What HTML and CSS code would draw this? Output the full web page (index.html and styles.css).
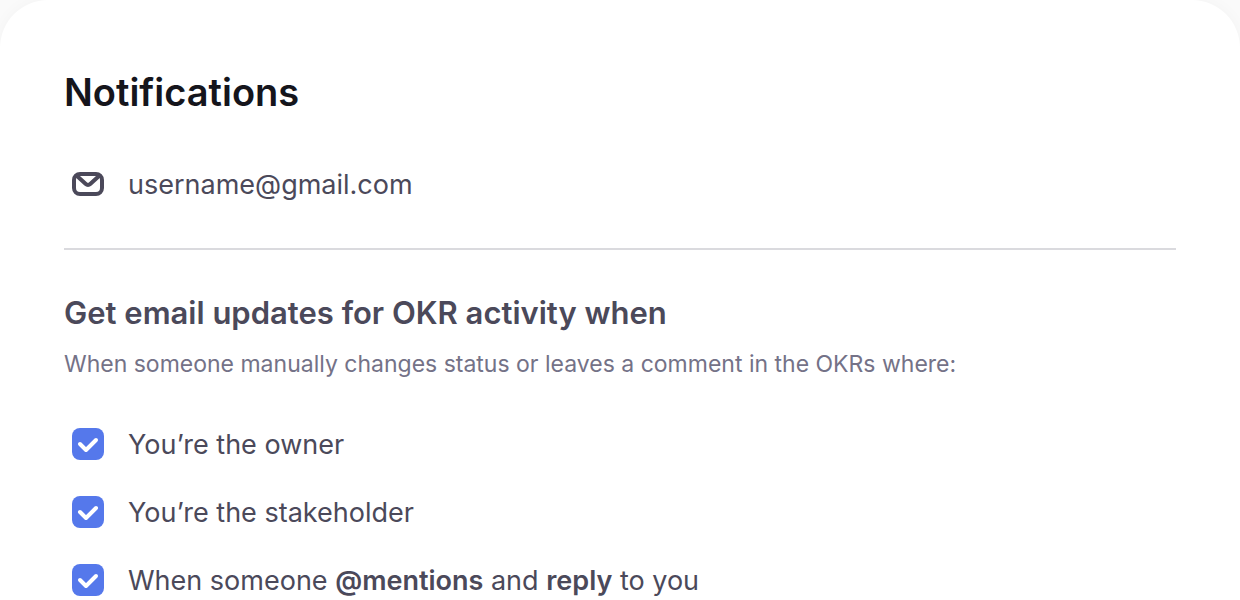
FILE: index.html
```html
<!DOCTYPE html>
<html lang="en">
<head>
    <meta charset="UTF-8">
    <title>Notifications</title>
    <link rel="stylesheet" href="styles.css">
</head>
<body>
    <main class="card">
        <h1 class="title">Notifications</h1>
        <div class="row account">
            <svg class="mail" viewBox="0 0 32 32" aria-hidden="true">
                <rect x="2" y="6" width="28" height="20" rx="6"/>
                <path d="M5 8l8.800 8a3.200 3.200 0 0 0 4.400 0L27 8"/>
            </svg>
            <span class="text">username@gmail.com</span>
        </div>
        <section class="updates">
            <h2 class="subtitle">Get email updates for OKR activity when</h2>
            <p class="hint">When someone manually changes status or leaves a comment in the OKRs where:</p>
            <div class="options">
                <label class="row"><input class="check" type="checkbox" checked><span class="text">You’re the owner</span></label>
                <label class="row"><input class="check" type="checkbox" checked><span class="text">You’re the stakeholder</span></label>
                <label class="row"><input class="check" type="checkbox" checked><span class="text">When someone <b>@mentions</b> and <b>reply</b> to you</span></label>
            </div>
        </section>
    </main>
</body>
</html>
```
FILE: styles.css
```css
* {
    box-sizing: border-box;
    margin: 0;
    padding: 0;
}

html {
    overflow: hidden;
}

body {
    min-height: 100vh;
    background: #fafafa;
    color: #4b495a;
    font-family: Gilroy, Inter, "Liberation Sans", sans-serif;
}

.card {
    min-height: 100vh;
    padding: 68px 64px 0;
    border-radius: 48px 48px 0 0;
    background: #fff;
    box-shadow: 0 0 16px rgba(0, 0, 0, 0.03);
}

.title {
    color: #15151c;
    font-size: 38px;
    font-weight: 600;
    line-height: 48px;
}

.row {
    display: flex;
    align-items: center;
    gap: 24px;
    padding-left: 8px;
    font-size: 27px;
}

.text {
    padding-top: 2px;
    line-height: 34px;
}

.text b {
    font-weight: 600;
}

.account {
    padding-top: 50px;
    padding-bottom: 46px;
    border-bottom: 2px solid #dadade;
}

.mail {
    width: 32px;
    height: 32px;
    fill: none;
    stroke: #4b495a;
    stroke-width: 4;
    stroke-linecap: round;
    stroke-linejoin: round;
}

.updates {
    padding-top: 42px;
}

.subtitle {
    font-size: 31px;
    font-weight: 600;
    line-height: 42px;
}

.hint {
    padding-top: 14px;
    color: #747287;
    font-size: 23px;
    line-height: 32px;
}

.options {
    display: grid;
    gap: 32px;
    padding-top: 46px;
}

.check {
    appearance: none;
    width: 32px;
    height: 32px;
    border-radius: 8px;
    background: #5578eb url("data:image/svg+xml,%3Csvg xmlns='http://www.w3.org/2000/svg' viewBox='0 0 32 32'%3E%3Cpath d='M8 16l6 6L24 12' fill='none' stroke='%23fff' stroke-width='4' stroke-linecap='round' stroke-linejoin='round'/%3E%3C/svg%3E");
}
```
